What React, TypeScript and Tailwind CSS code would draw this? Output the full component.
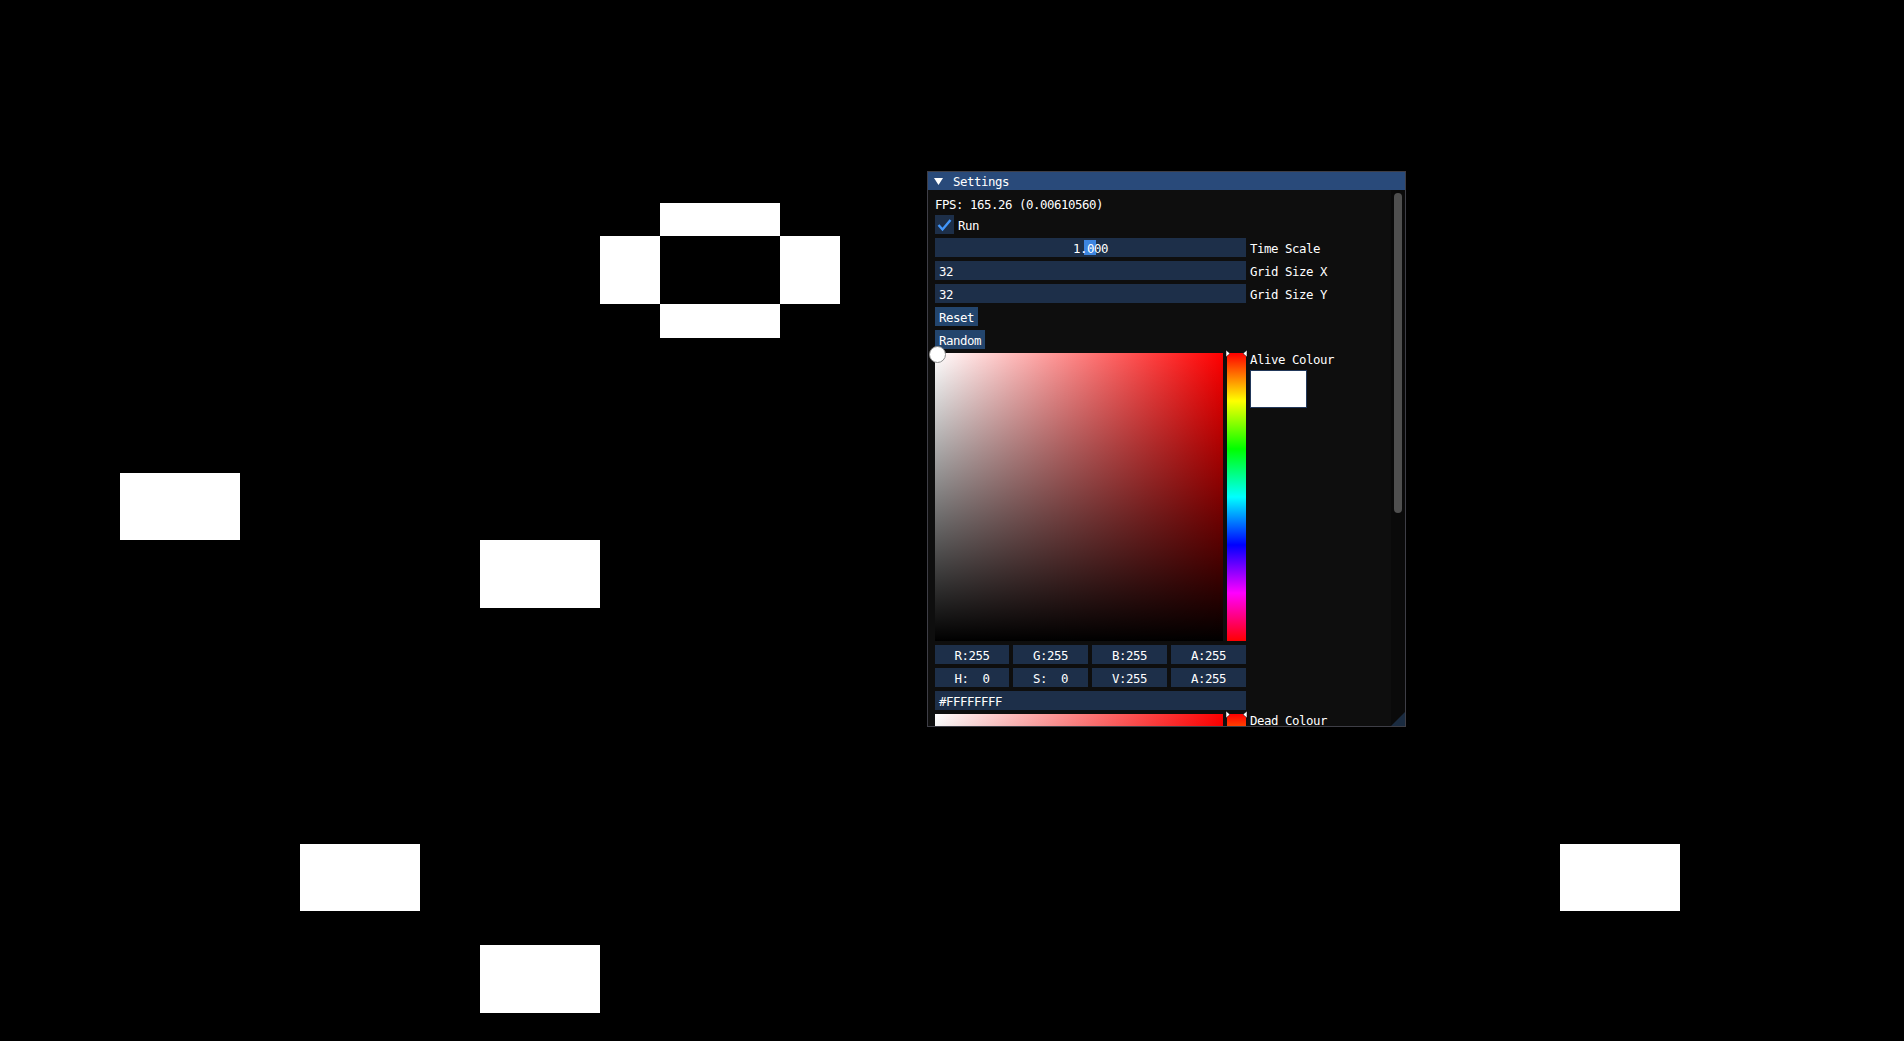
import React from 'react';

// cells that are alive on the board (pixel rects)
const cells = [
  { x: 660, y: 203, w: 120, h: 33 },
  { x: 600, y: 236, w: 60, h: 68 },
  { x: 780, y: 236, w: 60, h: 68 },
  { x: 660, y: 304, w: 120, h: 34 },
  { x: 120, y: 473, w: 120, h: 67 },
  { x: 480, y: 540, w: 120, h: 68 },
  { x: 300, y: 844, w: 120, h: 67 },
  { x: 480, y: 945, w: 120, h: 68 },
  { x: 1560, y: 844, w: 120, h: 67 },
];

function Row({ label, children }: { label: string; children: React.ReactNode }) {
  return (
    <div className="flex items-center gap-[4px] h-[19px] shrink-0">
      <div className="relative w-[311px] h-[19px] pt-[1px] bg-[#1d2f49] flex items-center">{children}</div>
      <span className="whitespace-pre pt-[1px]">{label}</span>
    </div>
  );
}

function Button({ label }: { label: string }) {
  return (
    <div className="flex shrink-0">
      <div className="h-[19px] px-[4px] pt-[1px] bg-[#23456d] flex items-center">{label}</div>
    </div>
  );
}

function Picker({ label, swatch, cursor }: { label: string; swatch: string; cursor?: boolean }) {
  return (
    <div className="flex gap-[4px] shrink-0">
      <div className="relative w-[288px] h-[288px] bg-[linear-gradient(to_right,#ffffff,#ff0000)]">
        <div className="absolute inset-0 bg-[linear-gradient(to_bottom,rgba(0,0,0,0),#000000)]" />
        {cursor && (
          <div className="absolute left-[-6px] top-[-7px] w-[17px] h-[17px] rounded-full bg-white border border-[#8a8a8a]" />
        )}
      </div>
      <div className="relative w-[19px] h-[288px] bg-[linear-gradient(to_bottom,#ff0000,#ffff00,#00ff00,#00ffff,#0000ff,#ff00ff,#ff0000)]">
        <svg className="absolute left-[-1px] top-[-3px] overflow-visible" width="21" height="7">
          <polygon points="0,0 4,3.5 0,7" fill="#ffffff" stroke="#000000" strokeWidth="0.5" />
          <polygon points="21,0 17,3.5 21,7" fill="#ffffff" stroke="#000000" strokeWidth="0.5" />
        </svg>
      </div>
      <div className="flex flex-col gap-[4px]">
        <span className="h-[13px]">{label}</span>
        <div className={`w-[57px] h-[38px] border border-[#22385a] ${swatch}`} />
      </div>
    </div>
  );
}

function NumBox({ text, w }: { text: string; w: string }) {
  return (
    <div className={`h-[19px] pt-[1px] bg-[#1d2f49] flex items-center justify-center whitespace-pre ${w}`}>{text}</div>
  );
}

export default function App() {
  return (
    <div className="relative w-[1904px] h-[1041px] bg-black overflow-hidden">
      {cells.map((c, i) => (
        <div key={i} className="absolute bg-white" style={{ left: c.x, top: c.y, width: c.w, height: c.h }} />
      ))}

      <div className="absolute left-[927px] top-[171px] w-[479px] h-[556px] bg-[#0e0e0e] flex flex-col overflow-hidden text-white font-['DejaVu_Sans_Mono',monospace] text-[12.4px] tracking-[-0.46px] leading-[13px]">
        <div className="h-[19px] shrink-0 bg-[#294a7a] flex items-center pl-[7px] pt-[1px]">
          <svg width="9" height="7" className="mr-[10px]">
            <polygon points="0,0 9,0 4.5,7" fill="#ffffff" />
          </svg>
          <span>Settings</span>
        </div>

        <div className="flex-1 flex min-h-0">
          <div className="flex-1 min-w-0 pl-[8px] pt-[8px] flex flex-col gap-[4px] overflow-hidden">
            <div className="h-[13px] shrink-0">FPS: 165.26 (0.00610560)</div>

            <div className="flex items-center gap-[4px] h-[19px] shrink-0">
              <div className="w-[19px] h-[19px] bg-[#1d2f49]">
                <svg width="19" height="19">
                  <polyline points="3.5,10 7.5,14.5 15.5,5" fill="none" stroke="#4296fa" strokeWidth="2.4" />
                </svg>
              </div>
              <span className="pt-[1px]">Run</span>
            </div>

            <Row label="Time Scale">
              <div className="absolute left-[149px] top-[2px] w-[12px] h-[15px] bg-[#3d85e0]" />
              <span className="relative w-full text-center">1.000</span>
            </Row>
            <Row label="Grid Size X">
              <span className="pl-[4px]">32</span>
            </Row>
            <Row label="Grid Size Y">
              <span className="pl-[4px]">32</span>
            </Row>

            <Button label="Reset" />
            <Button label="Random" />

            <Picker label="Alive Colour" swatch="bg-white" cursor />

            <div className="flex gap-[4px] shrink-0">
              <NumBox text="R:255" w="w-[74px]" />
              <NumBox text="G:255" w="w-[75px]" />
              <NumBox text="B:255" w="w-[75px]" />
              <NumBox text="A:255" w="w-[75px]" />
            </div>
            <div className="flex gap-[4px] shrink-0">
              <NumBox text="H:  0" w="w-[74px]" />
              <NumBox text="S:  0" w="w-[75px]" />
              <NumBox text="V:255" w="w-[75px]" />
              <NumBox text="A:255" w="w-[75px]" />
            </div>
            <div className="w-[311px] h-[19px] shrink-0 bg-[#1d2f49] flex items-center pl-[4px] pt-[1px]">#FFFFFFFF</div>

            <Picker label="Dead Colour" swatch="bg-black" />
          </div>

          <div className="w-[15px] shrink-0 bg-[#0a0a0a] pt-[3px] pl-[3px] pr-[4px]">
            <div className="h-[320px] rounded-full bg-[#4f4f4f]" />
          </div>
        </div>

        <svg className="absolute right-[1px] bottom-[1px]" width="14" height="14">
          <polygon points="14,0 14,14 0,14" fill="#1a2b40" />
        </svg>
        <div className="absolute inset-0 border border-[#3e3e46] pointer-events-none" />
      </div>
    </div>
  );
}
